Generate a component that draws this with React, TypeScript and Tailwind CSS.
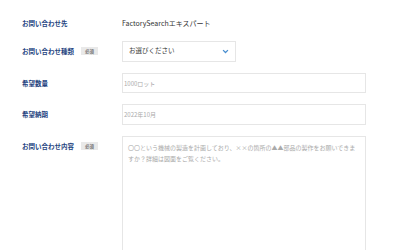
import React from "react";

const Badge: React.FC = () => (
  <span className="ml-[7px] inline-flex h-[8px] items-center bg-[#e9e9e9] px-[4px] text-[4.5px] leading-none text-[#777]">
    必須
  </span>
);

const Label: React.FC<{ text: string; required?: boolean }> = ({ text, required }) => (
  <div className="flex w-[100px] shrink-0 items-center text-[6.5px] font-bold leading-none text-[#23427e]">
    {text}
    {required && <Badge />}
  </div>
);

const App: React.FC = () => {
  return (
    <main
      className="h-[250px] w-[400px] overflow-hidden bg-white pl-[22px]"
      style={{ fontFamily: '"Noto Sans CJK JP", "Noto Sans", sans-serif' }}
    >
      {/* 問い合わせ先 */}
      <div className="mt-[13px] flex h-[20px] items-center">
        <Label text="お問い合わせ先" />
        <span className="text-[7px] text-[#333]">FactorySearchエキスパート</span>
      </div>

      {/* 種類 */}
      <div className="mt-[8px] flex h-[20px] items-center">
        <Label text="お問い合わせ種類" required />
        <div className="flex h-[21px] w-[114px] items-center justify-between border border-[#e6e6e6] pl-[6px] pr-[6px]">
          <span className="text-[6.5px] text-[#333]">お選びください</span>
          <svg width="7" height="5" viewBox="0 0 10 7" fill="none">
            <path d="M1.5 1.5 L5 5 L8.5 1.5" stroke="#4a8fd0" strokeWidth="1.8" />
          </svg>
        </div>
      </div>

      {/* 数量 */}
      <div className="mt-[12px] flex h-[20px] items-center">
        <Label text="希望数量" />
        <div className="flex h-[20px] w-[244px] items-center border border-[#e6e6e6] pl-[1px]">
          <span className="text-[6px] text-[#aaa]">1000ロット</span>
        </div>
      </div>

      {/* 納期 */}
      <div className="mt-[11px] flex h-[20px] items-center">
        <Label text="希望納期" />
        <div className="flex h-[21px] w-[244px] items-center border border-[#e6e6e6] pl-[1px]">
          <span className="text-[6px] text-[#aaa]">2022年10月</span>
        </div>
      </div>

      {/* 内容 */}
      <div className="mt-[12px] flex items-start">
        <div className="pt-[6px]">
          <Label text="お問い合わせ内容" required />
        </div>
        <div className="h-[140px] w-[244px] border border-[#e6e6e6] px-[5px] pt-[5px] text-[6px] leading-[11px] text-[#aaa]">
          〇〇という機械の製造を計画しており、××の箇所の▲▲部品の製作をお願いできますか？詳細は図面をご覧ください。
        </div>
      </div>
    </main>
  );
};

export default App;
